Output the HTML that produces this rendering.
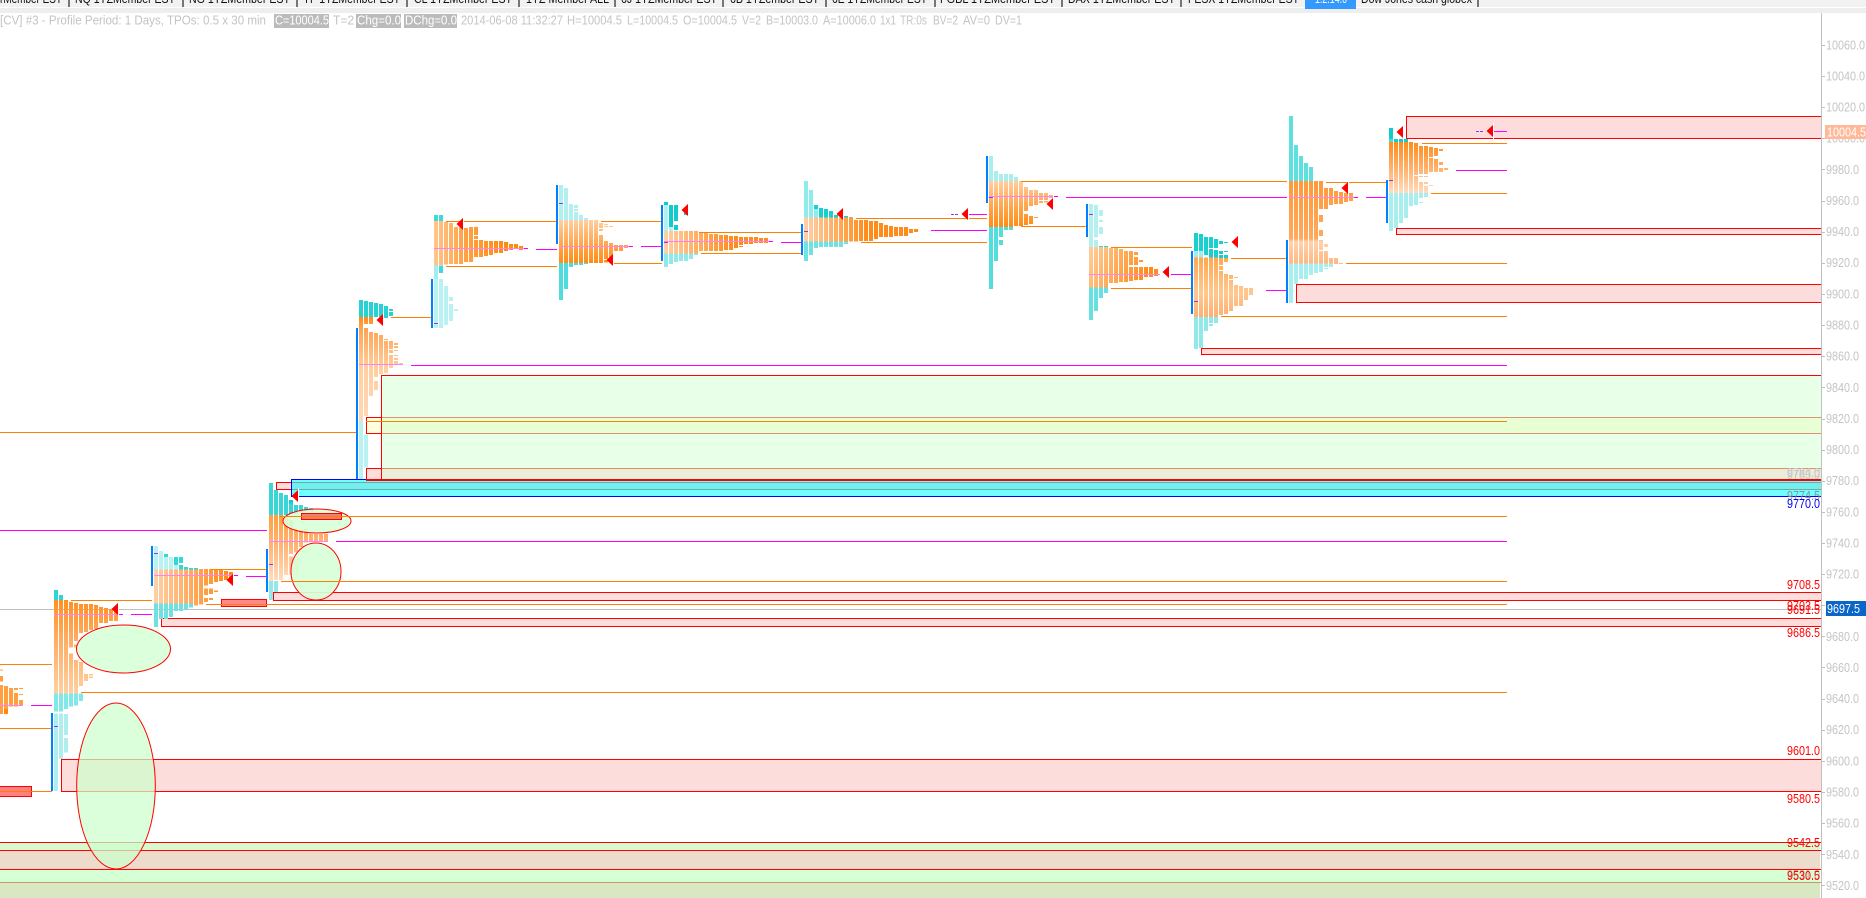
<!DOCTYPE html>
<html>
<head>
<meta charset="utf-8">
<title>Chart</title>
<style>
html,body{margin:0;padding:0;background:#fff;width:1866px;height:898px;overflow:hidden}
svg{display:block;position:absolute;left:0;top:0}
text{font-family:"Liberation Sans",sans-serif}
.tab{font-size:12.5px;fill:#111}
.h{font-size:12.5px;fill:#c4c4c4}
.w{font-size:12.5px;fill:#fff}
.ax{font-size:12.5px;fill:#c4c4c4}
.r{font-size:12.5px;fill:#f00}
</style>
</head>
<body>
<svg width="1866" height="898" viewBox="0 0 1866 898" xmlns="http://www.w3.org/2000/svg" shape-rendering="crispEdges">
<defs>
<linearGradient id="gB" gradientUnits="userSpaceOnUse" x1="0" y1="480" x2="0" y2="760"><stop offset="0" stop-color="#ff9020"/><stop offset=".4" stop-color="#ffab60"/><stop offset="1" stop-color="#ffcfa0"/></linearGradient>
<linearGradient id="gC" gradientUnits="userSpaceOnUse" x1="462" y1="0" x2="690" y2="0"><stop offset="0" stop-color="#ffd0a4"/><stop offset=".5" stop-color="#ffaa5c"/><stop offset="1" stop-color="#ff8a10"/></linearGradient>
<linearGradient id="gD" gradientUnits="userSpaceOnUse" x1="0" y1="225" x2="0" y2="423"><stop offset="0" stop-color="#ffa040"/><stop offset=".5" stop-color="#ffb67a"/><stop offset="1" stop-color="#ffdcc0"/></linearGradient>
<linearGradient id="gE" gradientUnits="userSpaceOnUse" x1="0" y1="441" x2="0" y2="753"><stop offset="0" stop-color="#ff8c1a"/><stop offset=".12" stop-color="#ffa454"/><stop offset=".5" stop-color="#ffcf9f"/><stop offset="1" stop-color="#ffd8b8"/></linearGradient>
<linearGradient id="gF" gradientUnits="userSpaceOnUse" x1="282" y1="0" x2="500" y2="0"><stop offset="0" stop-color="#ffc68c"/><stop offset=".45" stop-color="#ffa040"/><stop offset="1" stop-color="#ff8a10"/></linearGradient>
<linearGradient id="gG" gradientUnits="userSpaceOnUse" x1="0" y1="150" x2="0" y2="279"><stop offset="0" stop-color="#ffcfa0"/><stop offset=".55" stop-color="#ffa850"/><stop offset="1" stop-color="#ff8c14"/></linearGradient>
<linearGradient id="gH" gradientUnits="userSpaceOnUse" x1="972" y1="0" x2="1180" y2="0"><stop offset="0" stop-color="#ffd0a8"/><stop offset="1" stop-color="#ff8c1a"/></linearGradient>
<linearGradient id="gI" gradientUnits="userSpaceOnUse" x1="72" y1="0" x2="260" y2="0"><stop offset="0" stop-color="#ffd0a8"/><stop offset="1" stop-color="#ff8c1a"/></linearGradient>
<linearGradient id="gJ" gradientUnits="userSpaceOnUse" x1="0" y1="123" x2="0" y2="261"><stop offset="0" stop-color="#ffcf9f"/><stop offset=".55" stop-color="#ffa64e"/><stop offset="1" stop-color="#ff8c14"/></linearGradient>
<linearGradient id="gK" gradientUnits="userSpaceOnUse" x1="933" y1="321" x2="1100" y2="400"><stop offset="0" stop-color="#ffcc99"/><stop offset="1" stop-color="#ff8c1a"/></linearGradient>
<linearGradient id="gL" gradientUnits="userSpaceOnUse" x1="0" y1="353" x2="0" y2="531"><stop offset="0" stop-color="#ffa850"/><stop offset=".6" stop-color="#ffc890"/><stop offset="1" stop-color="#ffb070"/></linearGradient>
<linearGradient id="gM" gradientUnits="userSpaceOnUse" x1="0" y1="243" x2="0" y2="490"><stop offset="0" stop-color="#ff9a3a"/><stop offset=".7" stop-color="#ffa95e"/><stop offset=".74" stop-color="#ffd2ae"/><stop offset="1" stop-color="#ffb880"/></linearGradient>
<linearGradient id="gN" gradientUnits="userSpaceOnUse" x1="0" y1="126" x2="0" y2="279"><stop offset="0" stop-color="#ff8c1a"/><stop offset=".5" stop-color="#ffb06a"/><stop offset="1" stop-color="#ffdcc0"/></linearGradient>
</defs>

<!-- base -->
<rect width="1866" height="898" fill="#fff"/>

<!-- tab bar -->
<rect width="1866" height="7" fill="#f2f2f2"/>
<rect y="7" width="1866" height="1" fill="#fff"/>
<rect y="8" width="1866" height="5" fill="#eeeeee"/>
<rect x="1305" y="0" width="51" height="9" fill="#3399ff"/>
<g fill="#777">
<rect x="68" width="2" height="7"/><rect x="182" width="2" height="7"/><rect x="296" width="2" height="7"/><rect x="406" width="2" height="7"/><rect x="518" width="2" height="7"/><rect x="614" width="2" height="7"/><rect x="722" width="2" height="7"/><rect x="825" width="2" height="7"/><rect x="934" width="2" height="7"/><rect x="1061" width="2" height="7"/><rect x="1180" width="2" height="7"/><rect x="1477" width="2" height="7"/>
</g>
<text class="tab" x="0" y="3" textLength="62" lengthAdjust="spacingAndGlyphs">rMember EST</text>
<text class="tab" x="75" y="3" textLength="100" lengthAdjust="spacingAndGlyphs">NQ 1YZMember EST</text>
<text class="tab" x="189" y="3" textLength="101" lengthAdjust="spacingAndGlyphs">NG 1YZMember EST</text>
<text class="tab" x="303" y="3" textLength="97" lengthAdjust="spacingAndGlyphs">YF 1YZMember EST</text>
<text class="tab" x="414" y="3" textLength="98" lengthAdjust="spacingAndGlyphs">CL 1YZMember EST</text>
<text class="tab" x="526" y="3" textLength="83" lengthAdjust="spacingAndGlyphs">1YZ Member ALL</text>
<text class="tab" x="621" y="3" textLength="96" lengthAdjust="spacingAndGlyphs">6J 1YZMember EST</text>
<text class="tab" x="730" y="3" textLength="89" lengthAdjust="spacingAndGlyphs">6B 1YZember EST</text>
<text class="tab" x="832" y="3" textLength="95" lengthAdjust="spacingAndGlyphs">6E 1YZMember EST</text>
<text class="tab" x="940" y="3" textLength="115" lengthAdjust="spacingAndGlyphs">FGBL 1YZMember EST</text>
<text class="tab" x="1068" y="3" textLength="107" lengthAdjust="spacingAndGlyphs">DAX 1YZMember EST</text>
<text class="tab" x="1188" y="3" textLength="111" lengthAdjust="spacingAndGlyphs">FESX 1YZMember EST</text>
<text class="tab" x="1315" y="3" textLength="32" lengthAdjust="spacingAndGlyphs" style="fill:#fff">1.2.14.0</text>
<text class="tab" x="1361" y="3" textLength="111" lengthAdjust="spacingAndGlyphs">Dow Jones cash globex</text>

<!-- zone fills -->
<g stroke="#f00" stroke-width="1">
<rect x="61.5" y="759.5" width="1769" height="32" fill="#fddcdc"/>
<rect x="1406.5" y="116.5" width="424" height="22" fill="#fddcdc"/>
<rect x="1396.5" y="228.5" width="434" height="6" fill="#fddcdc"/>
<rect x="1296.5" y="284.5" width="534" height="18" fill="#fddcdc"/>
<rect x="1201.5" y="348.5" width="629" height="6" fill="#fddcdc"/>
<rect x="273.5" y="592.5" width="1557" height="8" fill="#fddcdc"/>
<rect x="161.5" y="618.5" width="1669" height="8" fill="#fddcdc"/>
<rect x="381.5" y="375.5" width="1450" height="105" fill="#e8ffe8"/>
<rect x="366.5" y="417.5" width="15" height="16" fill="#ffffdd"/>
<rect x="366.5" y="468.5" width="15" height="12" fill="#fddcdc"/>
</g>
<rect x="382" y="418" width="1439" height="15" fill="#e8ffd4"/>
<rect x="382" y="469" width="1439" height="11" fill="#e8eed8"/>
<rect x="382" y="417" width="1439" height="1" fill="#e09078"/>
<rect x="382" y="433" width="1439" height="1" fill="#e09078"/>
<rect x="382" y="468" width="1439" height="1" fill="#e88868"/>
<!-- cyan zone -->
<rect x="291" y="480" width="1530" height="16" fill="#70ffff"/>
<rect x="291" y="482" width="1530" height="7" fill="#70f0f0"/>
<rect x="276.5" y="482.5" width="15" height="7" fill="#fddcdc" stroke="#f00"/>
<rect x="291" y="482" width="1530" height="1" fill="#70a8a8"/>
<rect x="291" y="489" width="1530" height="1" fill="#70a8a8"/>
<rect x="291" y="496" width="1530" height="1" fill="#00f"/>
<rect x="291" y="479" width="75" height="1" fill="#00f"/>
<rect x="291" y="479" width="1" height="18" fill="#00f"/>
<rect x="366" y="479" width="1456" height="2" fill="#f00"/>
<!-- bottom bands -->
<rect x="0" y="842" width="1820" height="8" fill="#d8f8d0"/>
<rect x="0" y="850" width="1820" height="19" fill="#eddccb"/>
<rect x="0" y="869" width="1820" height="13" fill="#d6ffd6"/>
<rect x="0" y="882" width="1820" height="16" fill="#d8e8c2"/>
<rect x="0" y="842" width="1821" height="1" fill="#f00"/>
<rect x="0" y="850" width="1821" height="1" fill="#f00"/>
<rect x="0" y="869" width="1821" height="1" fill="#f00"/>
<rect x="0" y="882" width="1821" height="1" fill="#c89868"/>

<!-- right side cover hides the open ends of the zones -->
<rect x="1821" y="13" width="45" height="885" fill="#fff"/>

<!-- gray current price -->
<rect x="0" y="609" width="1821" height="1" fill="#c0c0c0"/>

<!-- salmon rects -->
<g stroke="#f00" stroke-width="1">
<rect x="221.5" y="599.5" width="45" height="7" fill="#ff8888"/>
<rect x="-5" y="786.5" width="36.5" height="10" fill="#ff8080"/>
</g>

<!-- profile A -->
<g transform="translate(0,620) scale(.33333)" stroke-width="12" fill="none">
<path stroke="#ff9f40" d="M3 148V151M3 168V184M3 195V282M18 198V282M33 204V260M48 204V210M48 219V260M63 204V207M63 222V225M63 240V258"/>
<path stroke="#ff8a10" d="M18 267V282"/>
</g>

<!-- profiles in zoom3 space -->
<g transform="translate(0,440) scale(.33333)" stroke-width="12" fill="none">
<!-- B -->
<path stroke="#30d4d4" d="M168 450V480M183 465V480"/>
<path stroke="url(#gB)" d="M168 480V760M183 480V760M198 480V760M213 486V622M213 640V760M228 489V603M228 613V622M228 660V760M243 492V579M243 666V738M258 492V576M258 702V723M273 492V570M273 702V706M273 710V714M288 495V567M303 501V549M318 504V549M333 507V543M348 507V543"/>
<path stroke="#80e8e8" d="M168 760V815M183 760V815M198 760V807M213 760V800M228 760V797M243 760V783"/>
<path stroke="#aeeeee" d="M168 820V1053M183 820V957M198 822V885M198 894V938"/>
<!-- C -->
<path stroke="#b8f2f2" d="M468 318V388M483 333V388M498 351V388M513 351V388M528 375V388"/>
<path stroke="#30d8d8" d="M498 342V351M528 351V375M543 351V369M543 375V388M558 381V388M573 384V388M588 384V388"/>
<path stroke="url(#gC)" d="M468 388V491M483 388V491M498 388V491M513 388V491M528 388V491M543 388V491M558 388V491M573 388V491M588 388V497M603 387V493M618 387V435M618 436V438M618 445V465M618 474V486M633 387V432M633 445V462M633 474V480M648 390V426M648 451V456M663 390V423M678 393V420M693 396V414"/>
<path stroke="#70e0e0" d="M468 491V561M483 491V537M498 491V537M513 491V531M528 491V513M543 491V513M558 491V509M573 491V503"/>
<!-- D -->
<path stroke="#38d6d6" d="M813 129V225M828 150V225M843 159V225M858 165V225M873 190V222M888 195V222M903 195V215M918 201V215M933 204V215"/>
<path stroke="#10cccc" d="M873 180V190"/>
<path stroke="url(#gD)" d="M813 225V423M828 225V420M843 225V420M858 234V405M873 240V342M873 350V405M888 264V338M888 350V405M903 267V321M903 326V336M918 267V308M933 282V305M948 282V305M963 282V305M978 282V305"/>
<path stroke="#90e8e8" d="M813 423V480M828 423V456"/>
</g>

<!-- profiles in zoom4 space -->
<g transform="translate(340,170) scale(.33333)" stroke-width="12" fill="none">
<!-- E -->
<path stroke="#28d2d2" d="M63 390V441M78 393V441M93 396V441M108 399V441M123 402V441M138 408V444M153 417V423M153 426V438"/>
<path stroke="url(#gE)" d="M63 441V753M78 441V462M78 474V738M93 441V462M93 486V678M108 489V621M108 633V660M123 495V612M138 507V510M138 513V609M153 513V537M153 540V549M153 555V594M168 519V525M168 528V534M168 540V543M168 555V558M168 564V570M168 573V585M183 579V585"/>
<path stroke="#b8f2f2" d="M63 753V927M78 793V893M288 327V474M303 327V474M318 348V465M333 381V393M333 402V453M348 417V423"/>
<!-- F -->
<path stroke="#40d8d8" d="M288 135V153M303 135V153M303 287V309"/>
<path stroke="url(#gF)" d="M288 153V287M303 153V285M318 156V284M333 159V282M348 171V282M363 171V282M378 174V276M393 171V276M408 171V195M408 198V207M408 210V261M423 210V261M438 213V258M453 213V255M468 213V249M483 213V249M498 216V243M513 222V240M528 222V237M543 228V240M558 234V237"/>
<path stroke="#a0eeee" d="M288 287V327"/>
<!-- G -->
<path stroke="#b0f0f0" d="M663 45V150M678 54V150M693 102V150M708 105V114M708 117V123M708 126V150M723 135V150M738 144V150"/>
<path stroke="url(#gG)" d="M663 150V279M678 150V279M693 150V279M708 150V279M723 150V279M738 150V279M753 150V279M768 150V279M783 159V174M783 177V183M783 195V279M798 162V165M798 168V171M798 213V267M798 270V277M813 168V171M813 219V264M828 225V243M843 225V243M858 225V234"/>
<path stroke="#4fdcdc" d="M663 279V390M678 279V357M693 279V291M708 279V285M723 279V285M738 279V282"/>
<!-- H -->
<path stroke="#b4f0f0" d="M978 105V183M993 171V183"/>
<path stroke="#10cccc" d="M978 96V105M993 105V171M1008 105V153M1008 165V180M1038 122V135"/>
<path stroke="url(#gH)" d="M978 183V251M993 183V251M1008 183V251M1023 183V251M1038 183V251M1053 183V251M1068 183V251M1083 186V243M1098 189V243M1113 192V243M1128 192V243M1143 195V243M1158 195V240M1173 198V240M1188 198V234M1203 201V225M1203 228V231M1218 201V222M1233 201V222M1248 201V219M1263 204V219M1278 204V219M1293 213V216"/>
<path stroke="#90e8e8" d="M978 251V291M993 251V282M1008 251V276M1023 251V273M1038 251V273M1053 251V267M1068 251V255"/>
</g>

<!-- profiles in zoom5 space -->
<g transform="translate(780,140) scale(.33333)" stroke-width="12" fill="none">
<!-- I -->
<path stroke="#8eecec" d="M78 123V233M93 150V233M108 207V233"/>
<path stroke="#18cfcf" d="M108 195V207M123 204V233M138 207V233M153 213V233M168 225V233M198 228V233"/>
<path stroke="url(#gI)" d="M78 233V305M93 233V305M108 233V305M123 233V305M138 233V305M153 233V305M168 233V305M183 233V305M198 233V305M213 231V305M228 240V305M243 240V303M258 240V303M273 243V303M288 243V297M303 249V291M318 255V291M333 258V291M348 261V288M363 261V288M378 261V288M393 267V279M408 267V276"/>
<path stroke="#70e2e2" d="M78 305V363M93 305V345M108 305V324M123 305V321M138 305V321M153 305V321M168 305V321M183 305V321M198 305V312"/>
<!-- J -->
<path stroke="#a8eeee" d="M633 48V123M648 93V123M663 102V123M678 102V123M693 102V123M708 111V123"/>
<path stroke="url(#gJ)" d="M633 123V261M648 123V261M663 123V261M678 123V261M693 123V261M708 123V258M723 123V258M738 141V213M738 222V255M753 150V198M753 228V252M768 150V195M768 231V234M783 159V180M783 183V189M798 159V180M798 183V188M813 165V174"/>
<path stroke="#52dede" d="M633 261V447M648 261V363M663 261V291M663 300V315M678 261V270M693 261V270"/>
<!-- K -->
<path stroke="#b4f0f0" d="M933 192V321M948 195V293M948 300V321M963 210V228M963 240V246M963 261V282"/>
<path stroke="#30d8d8" d="M963 318V321M978 318V321"/>
<path stroke="url(#gK)" d="M933 321V443M948 321V443M963 321V443M978 321V443M993 324V429M1008 324V429M1023 327V426M1038 333V426M1053 333V375M1053 381V423M1068 336V345M1068 351V375M1068 381V420M1083 360V366M1083 381V420M1098 381V411M1113 381V411M1128 387V408"/>
<path stroke="#66e0e0" d="M933 443V540M948 443V513M963 443V474M978 443V459"/>
<!-- L -->
<path stroke="#18d0d0" d="M1248 279V333M1263 282V333M1278 291V345M1293 291V324M1293 327V353M1308 297V324M1308 330V353M1323 303V312M1323 333V342M1323 345V354M1338 306V309M1338 333V336M1338 345V354"/>
<path stroke="#a0ecec" d="M1248 333V353M1263 333V353"/>
<path stroke="url(#gL)" d="M1248 353V531M1263 353V531M1278 353V531M1293 353V531M1308 353V531M1323 354V375M1323 378V390M1323 393V525M1338 354V366M1338 402V522M1353 405V417M1353 420V513M1368 411V414M1368 435V498M1383 438V498M1398 444V480M1413 444V465"/>
<path stroke="#90e8e8" d="M1248 531V627M1263 531V624M1278 531V573M1293 531V549M1293 552V558M1308 531V549"/>
</g>

<!-- profiles in zoom6 space -->
<g transform="translate(1240,100) scale(.33333)" stroke-width="12" fill="none">
<!-- M -->
<path stroke="#5ce0e0" d="M153 48V243M168 135V243M183 168V243M198 189V243M213 201V243"/>
<path stroke="url(#gM)" d="M153 243V490M168 243V490M183 243V490M198 243V490M213 243V490M228 243V490M243 243V327M243 345V366M243 390V408M243 420V450M243 453V490M258 264V327M258 432V441M258 453V490M273 264V315M273 474V490M288 273V312M288 474V492M303 276V312M303 489V492M318 279V306M333 279V303"/>
<path stroke="#a8eeee" d="M153 490V609M168 490V552M183 490V537M198 490V537M213 490V525M228 490V519M243 490V516M258 490V501M258 504V507M273 490V501"/>
<!-- N -->
<path stroke="#10cccc" d="M453 84V117M468 117V126M483 117V126M498 117V126"/>
<path stroke="#50d8d8" d="M453 117V126"/>
<path stroke="url(#gN)" d="M453 126V279M468 126V279M483 126V279M498 126V279M513 126V279M528 129V225M528 228V279M543 138V222M543 228V231M543 246V279M558 138V222M558 228V231M558 246V252M558 258V279M573 141V171M573 174V216M573 255V258M588 144V168M588 177V216M603 147V153M603 186V195M603 204V216M618 204V210"/>
<path stroke="#a8eeee" d="M453 279V393M468 279V384M483 279V369M498 279V354M513 279V318M528 279V315M543 279V294M543 306V309M558 279V291"/>
</g>

<!-- ellipses -->
<g shape-rendering="auto" stroke="#f00" stroke-width="1">
<ellipse cx="123.5" cy="649" rx="47" ry="24" fill="#dcffdc"/>
<ellipse cx="116" cy="786" rx="39.3" ry="83" fill="#ccffcc" fill-opacity=".72"/>
<ellipse cx="316" cy="571.5" rx="25" ry="28.5" fill="#d8ffd8" fill-opacity=".92"/>
<ellipse cx="317" cy="521" rx="34" ry="12" fill="#d8ffd8" fill-opacity=".9"/>
</g>
<rect x="301.5" y="513.5" width="40" height="6" fill="#f08070" stroke="#f00"/>

<!-- orange lines -->
<path fill="none" stroke="#ff8000" stroke-width="1" d="M81 692.5H1507M281 581.5H1507M279 516.5H1507M206 604.5H1507M0 664.5H52M0 728.5H52M0 791.5H52M71 600.5H152M211 569.5H266M391 317.5H431M446 221.5H556M446 266.5H557M613 263.5H662M601 221.5H661M699 232.5H801M701 253.5H801M0 432.5H356M366 421.5H1507M1221 316.5H1507M1422 143.5H1507M1431 193.5H1507M1346 263.5H1507M1326 182.5H1386M1021 181.5H1287M1111 288.5H1191M1111 247.5H1192M1231 258.5H1286M1021 226.5H1086M856 218.5H987M861 242.5H987M780 232.5H801M780 253.5H801"/>
<!-- magenta lines -->
<path fill="none" stroke="#ff00ff" stroke-width="1" d="M411 365.5H1507M1066 197.5H1287M1366 197.5H1386M1456 170.5H1507M1490 131.5H1507M1266 290.5H1286M781 242.5H801M931 230.5H987M967 214.5H987M1171 274.5H1191M536 249.5H557M641 246.5H662M781 242.5H802M0 530.5H267M336 541.5H1507M246 576.5H266M131 614.5H152M31 705.5H52"/>
<!-- faint over-profile lines -->
<path fill="none" stroke="#ff80ff" stroke-width="1" d="M54 614.5H119M154 575.5H234M269 541.5H328M359 364.5H403M434 248.5H528M559 246.5H633M664 241.5H773M989 196.5H1058M1089 274.5H1160M1289 197.5H1358M0 705.5H23"/>
<path fill="none" stroke="#ff00ff" stroke-width="1" d="M119 614.5H123M234 575.5H238M524 248.5H528M629 246.5H633M769 241.5H773M1054 196.5H1058M1354 197.5H1358"/>
<!-- purple dashes -->
<path fill="none" stroke="#9933ee" stroke-width="1" d="M54 726.5H58M154 553.5H158M269 564.5H273M434 323.5H438M559 203.5H563M664 242.5H668M804 231.5H808M989 197.5H993M1089 214.5H1093M1194 301.5H1198M1389 180.5H1393M951 214.5H954M955 214.5H958M1476 131.5H1479M1480 131.5H1483"/>

<!-- blue bars -->
<g fill="#0080ff">
<rect x="51" y="713" width="2" height="78"/>
<rect x="151" y="546" width="2" height="40"/>
<rect x="266" y="549" width="2" height="43"/>
<rect x="356" y="328" width="2" height="151"/>
<rect x="431" y="279" width="2" height="49"/>
<rect x="556" y="185" width="2" height="59"/>
<rect x="661" y="205" width="2" height="56"/>
<rect x="801" y="224" width="2" height="31"/>
<rect x="986" y="156" width="2" height="47"/>
<rect x="1086" y="204" width="2" height="33"/>
<rect x="1191" y="251" width="2" height="63"/>
<rect x="1286" y="240" width="2" height="63"/>
<rect x="1386" y="180" width="2" height="43"/>
</g>

<!-- arrows -->
<g fill="#f00" stroke="none" shape-rendering="auto">
<path d="M111.5 609l7-6.5v13z"/><path d="M226.5 580l7-6.5v13z"/><path d="M291.5 496l7-6.5v13z"/><path d="M376.5 320l7-6.5v13z"/><path d="M456.5 224l7-6.5v13z"/><path d="M606.5 260l7-6.5v13z"/><path d="M681.5 210l7-6.5v13z"/><path d="M836.5 214l7-6.5v13z"/><path d="M961.5 214l7-6.5v13z"/><path d="M1046.5 204l7-6.5v13z"/><path d="M1162.5 272l7-6.5v13z"/><path d="M1231.5 242l7-6.5v13z"/><path d="M1341.5 188l7-6.5v13z"/><path d="M1396.5 132l7-6.5v13z"/><path d="M1486.5 131l7-6.5v13z"/>
</g>
<path fill="none" stroke="#fff" stroke-width="1" d="M118.5 601V617M233.5 572V588M298.5 488V504M383.5 312V328M463.5 216V232M613.5 252V268M688.5 202V218M843.5 206V222M968.5 206V222M1053.5 196V212M1169.5 264V280M1238.5 234V250M1348.5 180V196M1403.5 124V140M1493.5 123V139"/>

<!-- header text -->
<rect x="274" y="14" width="55" height="14" fill="#bbbbbb"/>
<rect x="356" y="14" width="45" height="14" fill="#bbbbbb"/>
<rect x="404" y="14" width="53" height="14" fill="#bbbbbb"/>
<text class="h" x="0" y="24.5" textLength="266" lengthAdjust="spacingAndGlyphs">[CV]  #3 - Profile Period: 1 Days, TPOs: 0.5 x 30 min</text>
<text class="w" x="275" y="24.5" textLength="54" lengthAdjust="spacingAndGlyphs">C=10004.5</text>
<text class="h" x="333" y="24.5" textLength="21" lengthAdjust="spacingAndGlyphs">T=2</text>
<text class="w" x="357" y="24.5" textLength="44" lengthAdjust="spacingAndGlyphs">Chg=0.0</text>
<text class="w" x="405" y="24.5" textLength="52" lengthAdjust="spacingAndGlyphs">DChg=0.0</text>
<text class="h" x="461" y="24.5" textLength="102" lengthAdjust="spacingAndGlyphs">2014-06-08 11:32:27</text>
<text class="h" x="567" y="24.5" textLength="55" lengthAdjust="spacingAndGlyphs">H=10004.5</text>
<text class="h" x="627" y="24.5" textLength="51" lengthAdjust="spacingAndGlyphs">L=10004.5</text>
<text class="h" x="683" y="24.5" textLength="54" lengthAdjust="spacingAndGlyphs">O=10004.5</text>
<text class="h" x="742" y="24.5" textLength="19" lengthAdjust="spacingAndGlyphs">V=2</text>
<text class="h" x="766" y="24.5" textLength="52" lengthAdjust="spacingAndGlyphs">B=10003.0</text>
<text class="h" x="823" y="24.5" textLength="53" lengthAdjust="spacingAndGlyphs">A=10006.0</text>
<text class="h" x="880" y="24.5" textLength="16" lengthAdjust="spacingAndGlyphs">1x1</text>
<text class="h" x="900" y="24.5" textLength="27" lengthAdjust="spacingAndGlyphs">TR:0s</text>
<text class="h" x="933" y="24.5" textLength="25" lengthAdjust="spacingAndGlyphs">BV=2</text>
<text class="h" x="963" y="24.5" textLength="27" lengthAdjust="spacingAndGlyphs">AV=0</text>
<text class="h" x="995" y="24.5" textLength="27" lengthAdjust="spacingAndGlyphs">DV=1</text>

<!-- axis -->
<rect x="1821" y="13" width="1" height="885" fill="#c0c0c0"/>
<path fill="none" stroke="#c0c0c0" d="M1822 45.5h3M1822 76.5h3M1822 107.5h3M1822 138.5h3M1822 169.5h3M1822 201.5h3M1822 232.5h3M1822 263.5h3M1822 294.5h3M1822 325.5h3M1822 356.5h3M1822 387.5h3M1822 419.5h3M1822 450.5h3M1822 481.5h3M1822 512.5h3M1822 543.5h3M1822 574.5h3M1822 605.5h3M1822 636.5h3M1822 667.5h3M1822 699.5h3M1822 730.5h3M1822 761.5h3M1822 792.5h3M1822 823.5h3M1822 854.5h3M1822 885.5h3"/>
<g>
<text class="ax" x="1826" y="49.5" textLength="39" lengthAdjust="spacingAndGlyphs">10060.0</text>
<text class="ax" x="1826" y="80.5" textLength="39" lengthAdjust="spacingAndGlyphs">10040.0</text>
<text class="ax" x="1826" y="111.5" textLength="39" lengthAdjust="spacingAndGlyphs">10020.0</text>
<text class="ax" x="1826" y="142.5" textLength="39" lengthAdjust="spacingAndGlyphs">10000.0</text>
<text class="ax" x="1826" y="174" textLength="33" lengthAdjust="spacingAndGlyphs">9980.0</text>
<text class="ax" x="1826" y="205" textLength="33" lengthAdjust="spacingAndGlyphs">9960.0</text>
<text class="ax" x="1826" y="236" textLength="33" lengthAdjust="spacingAndGlyphs">9940.0</text>
<text class="ax" x="1826" y="267" textLength="33" lengthAdjust="spacingAndGlyphs">9920.0</text>
<text class="ax" x="1826" y="298.5" textLength="33" lengthAdjust="spacingAndGlyphs">9900.0</text>
<text class="ax" x="1826" y="329.5" textLength="33" lengthAdjust="spacingAndGlyphs">9880.0</text>
<text class="ax" x="1826" y="360.5" textLength="33" lengthAdjust="spacingAndGlyphs">9860.0</text>
<text class="ax" x="1826" y="392" textLength="33" lengthAdjust="spacingAndGlyphs">9840.0</text>
<text class="ax" x="1826" y="423" textLength="33" lengthAdjust="spacingAndGlyphs">9820.0</text>
<text class="ax" x="1826" y="454" textLength="33" lengthAdjust="spacingAndGlyphs">9800.0</text>
<text class="ax" x="1826" y="485" textLength="33" lengthAdjust="spacingAndGlyphs">9780.0</text>
<text class="ax" x="1826" y="516.5" textLength="33" lengthAdjust="spacingAndGlyphs">9760.0</text>
<text class="ax" x="1826" y="547.5" textLength="33" lengthAdjust="spacingAndGlyphs">9740.0</text>
<text class="ax" x="1826" y="578.5" textLength="33" lengthAdjust="spacingAndGlyphs">9720.0</text>
<text class="ax" x="1826" y="641" textLength="33" lengthAdjust="spacingAndGlyphs">9680.0</text>
<text class="ax" x="1826" y="672" textLength="33" lengthAdjust="spacingAndGlyphs">9660.0</text>
<text class="ax" x="1826" y="703" textLength="33" lengthAdjust="spacingAndGlyphs">9640.0</text>
<text class="ax" x="1826" y="734" textLength="33" lengthAdjust="spacingAndGlyphs">9620.0</text>
<text class="ax" x="1826" y="765.5" textLength="33" lengthAdjust="spacingAndGlyphs">9600.0</text>
<text class="ax" x="1826" y="796.5" textLength="33" lengthAdjust="spacingAndGlyphs">9580.0</text>
<text class="ax" x="1826" y="827.5" textLength="33" lengthAdjust="spacingAndGlyphs">9560.0</text>
<text class="ax" x="1826" y="859" textLength="33" lengthAdjust="spacingAndGlyphs">9540.0</text>
<text class="ax" x="1826" y="890" textLength="33" lengthAdjust="spacingAndGlyphs">9520.0</text>
</g>
<rect x="1825" y="125" width="41" height="14" fill="#ffb999"/>
<text x="1827" y="136.5" textLength="39" lengthAdjust="spacingAndGlyphs" style="font-size:13px;fill:#fff">10004.5</text>
<rect x="1826" y="601" width="40" height="15" fill="#0a66c8"/>
<text x="1827" y="613" textLength="33" lengthAdjust="spacingAndGlyphs" style="font-size:13px;fill:#fff">9697.5</text>

<!-- right labels -->
<g>
<text class="r" x="1787" y="479" textLength="33" lengthAdjust="spacingAndGlyphs" style="fill:#c8c8c8">9783.0</text>
<text class="r" x="1787" y="477" textLength="33" lengthAdjust="spacingAndGlyphs" style="fill:#c8c8c8">9784.0</text>
<text class="r" x="1787" y="500" textLength="33" lengthAdjust="spacingAndGlyphs" style="fill:#909090">9774.5</text>
<text class="r" x="1787" y="508" textLength="33" lengthAdjust="spacingAndGlyphs" style="fill:#00f">9770.0</text>
<text class="r" x="1787" y="589" textLength="33" lengthAdjust="spacingAndGlyphs">9708.5</text>
<text class="r" x="1787" y="610" textLength="33" lengthAdjust="spacingAndGlyphs">9703.5</text>
<text class="r" x="1787" y="614" textLength="33" lengthAdjust="spacingAndGlyphs">9691.5</text>
<text class="r" x="1787" y="637" textLength="33" lengthAdjust="spacingAndGlyphs">9686.5</text>
<text class="r" x="1787" y="755" textLength="33" lengthAdjust="spacingAndGlyphs">9601.0</text>
<text class="r" x="1787" y="803" textLength="33" lengthAdjust="spacingAndGlyphs">9580.5</text>
<text class="r" x="1787" y="847" textLength="33" lengthAdjust="spacingAndGlyphs">9542.5</text>
<text class="r" x="1787" y="879" textLength="33" lengthAdjust="spacingAndGlyphs" style="fill:#d8a0a0">9531.0</text>
<text class="r" x="1787" y="880" textLength="33" lengthAdjust="spacingAndGlyphs">9530.5</text>
</g>
</svg>
</body>
</html>
